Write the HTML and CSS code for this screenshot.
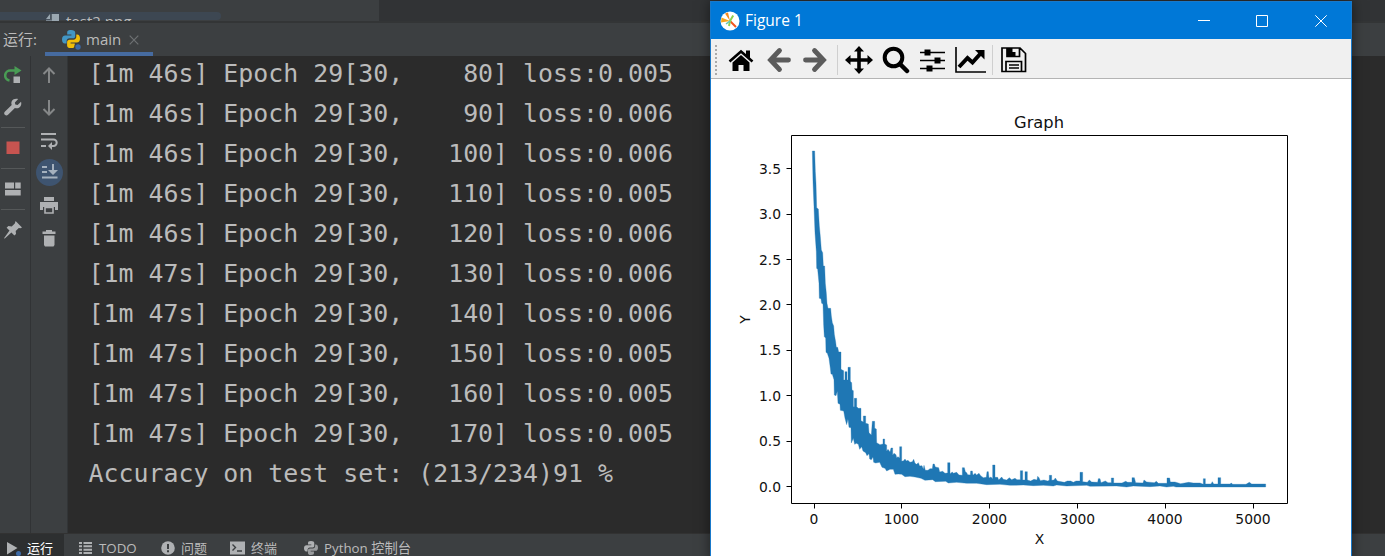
FILE: index.html
```html
<!DOCTYPE html>
<html lang="zh-CN">
<head>
<meta charset="utf-8">
<title>main</title>
<link rel="stylesheet" href="styles.css">
</head>
<body>
<svg class="defs" width="0" height="0">
  <defs>
    <symbol id="python" viewBox="0 0 18 18">
      <path class="py-a" d="M9 0C5.800 0 5.200 1.200 5.200 2.600v2h4.200v.8H3.200C1.200 5.400 0 7 0 9.400s1.200 4 2.800 4h1.800v-2.200c0-1.600 1.300-2.900 2.900-2.900h3.700c1.200 0 2-.9 2-2.100V2.600C13.200 1 11.800 0 9 0z"/>
      <path class="py-b" d="M9 18c3.200 0 3.800-1.200 3.800-2.600v-2H8.600v-.8h6.200c2 0 3.200-1.600 3.200-4s-1.200-4-2.800-4h-.9v2.200c0 1.600-1.300 2.900-2.900 2.900H7.700c-1.600 0-2.600 1-2.600 2.300v3.400C5.100 17 6.200 18 9 18z"/>
    </symbol>
  </defs>
</svg>
<div class="ide">
  <div class="project"><div class="tree">
    <div class="tree-row"><svg width="13" height="13" viewBox="0 0 13 13"><path fill="#9aa7b0" d="M5 0H13V13H0V6H5z"/><path fill="#9aa7b0" d="M4 0V5H0z"/><path fill="#56616a" d="M4.500 0V5.500H0v1h6V0z"/></svg><span>test2.png</span></div>
  </div></div>
  <div class="run-head">
    <span class="run-label">运行:</span>
    <div class="tab">
      <svg width="20" height="20" viewBox="0 0 20 20"><use href="#python" width="18" height="18"/><circle cx="16" cy="17" r="3.700" fill="#3c3f41"/><circle cx="16" cy="17" r="2.700" fill="#3d6aa6"/></svg>
      <span>main</span>
      <svg class="close" width="10" height="10" viewBox="0 0 10 10"><path d="M.7.7l8.600 8.600M9.300.7L.7 9.300"/></svg>
    </div>
  </div>
  <div class="work">
    <div class="tools tools-a">
      <svg width="18" height="18" viewBox="0 0 18 18"><path d="M12 4.500H7A5 5 0 0 0 5.500 14.500" fill="none" stroke="#499c54" stroke-width="2.600"/><path d="M10.500 0L17.500 4.500 10.500 9z" fill="#499c54"/><path d="M9.500 10.500h6.500v6.500h-6.500z" fill="#afb1b3"/></svg>
      <svg width="18" height="18" viewBox="0 0 18 18"><path fill="#afb1b3" d="M17 3.700l-3.400 3.300-2.300-.4-.4-2.200L14.200 1C11.800.1 9 .9 7.900 3c-.7 1.300-.7 2.500-.2 3.900L.8 13.700c-1 1-.7 2.300.1 3.100s2.200.9 3.100 0l6.900-6.900c1.500.6 3 .4 4.400-.5 1.800-1.200 2.400-3.600 1.700-5.700z"/></svg>
      <i class="rule"></i>
      <svg width="18" height="18" viewBox="0 0 18 18"><path fill="#c75450" d="M2.500 2.500h13v12.500h-13z"/></svg>
      <i class="rule"></i>
      <svg width="18" height="18" viewBox="0 0 18 18"><path fill="#afb1b3" d="M1 2.500h9v6H1zM11.200 2.500h5.500v6h-5.500zM1 10h15.700v5.500H1z"/></svg>
      <i class="rule"></i>
      <svg width="18" height="18" viewBox="0 0 18 18"><path fill="#afb1b3" d="M11.600 0L18 6.400l-1.500.8-1.700-.3-3.100 3.200.3 3-1.600 1.500-3-3L.8 17.500 0 17.300l5.500-7.700-2.900-2.900L4.400 5l3.300.4 3.100-3z"/></svg>
    </div>
    <div class="tools tools-b">
      <svg width="18" height="18" viewBox="0 0 18 18"><path class="arrow" d="M9 17V2.500M3.500 8L9 2.500 14.500 8"/></svg>
      <svg width="18" height="18" viewBox="0 0 18 18"><path class="arrow" d="M9 1v14.500M3.500 10L9 15.500 14.500 10"/></svg>
      <svg width="18" height="18" viewBox="0 0 18 18"><path d="M1 2h15M1 7.500h12.500a3.200 3.200 0 0 1 0 6.400H11M1 14h5" fill="none" stroke="#afb1b3" stroke-width="2"/><path d="M12 10v8l-4-4z" fill="#afb1b3"/></svg>
      <svg class="selected" width="27" height="27" viewBox="0 0 27 27"><circle cx="13.500" cy="13.500" r="13.500" fill="#3e5470"/><path fill="#a5b1be" d="M6 7h5v2H6zM6 12h5v2H6zM6 17.500h15.500v2H6zM16 5h2v6h4l-5 5-5-5h4z"/></svg>
      <svg width="18" height="18" viewBox="0 0 18 18"><path fill="#afb1b3" d="M4 0h10v4H4zM0 5h18v8h-3v-3H3v3H0z"/><path d="M5 10.500h8v5.500H5z" fill="none" stroke="#afb1b3" stroke-width="1.600"/></svg>
      <svg width="18" height="18" viewBox="0 0 18 18"><path fill="#afb1b3" d="M6 0h6v1.500h3.500V4h-13V1.500H6zM4 5.500h10.500V15l-1 1.500H5L4 15z"/></svg>
    </div>
    <pre class="console">[1m 46s] Epoch 29[30,    80] loss:0.005
[1m 46s] Epoch 29[30,    90] loss:0.006
[1m 46s] Epoch 29[30,   100] loss:0.006
[1m 46s] Epoch 29[30,   110] loss:0.005
[1m 46s] Epoch 29[30,   120] loss:0.006
[1m 47s] Epoch 29[30,   130] loss:0.006
[1m 47s] Epoch 29[30,   140] loss:0.006
[1m 47s] Epoch 29[30,   150] loss:0.005
[1m 47s] Epoch 29[30,   160] loss:0.005
[1m 47s] Epoch 29[30,   170] loss:0.005
Accuracy on test set: (213/234)91 %</pre>
  </div>
  <div class="status">
    <div class="item active"><svg width="15" height="15" viewBox="0 0 15 15"><path fill="#afb1b3" d="M1 1l10.500 6L1 13.500z"/><circle cx="12.500" cy="12.500" r="2.500" fill="#3d6aa6"/></svg><span>运行</span></div>
    <div class="item todo"><svg width="14" height="14" viewBox="0 0 14 14"><path fill="#afb1b3" d="M0 1h3v2H0zM4.500 1H13v2H4.500zM0 4.300h3v2H0zM4.500 4.300H13v2H4.500zM0 7.700h3v2H0zM4.500 7.700H13v2H4.500zM0 11h3v2H0zM4.500 11H13v2H4.500z"/></svg><span>TODO</span></div>
    <div class="item problems"><svg width="14" height="14" viewBox="0 0 14 14"><circle cx="7" cy="7" r="6.800" fill="#afb1b3"/><path d="M6 3h2v5H6zM6 9.200h2v2H6z" fill="#3c3f41"/></svg><span>问题</span></div>
    <div class="item terminal"><svg width="15" height="14" viewBox="0 0 15 14"><path d="M0 .5h15v13H0z" fill="#afb1b3"/><path d="M2.500 3.500L5.500 6.500l-3 3M7 10h5" fill="none" stroke="#3c3f41" stroke-width="1.400"/></svg><span>终端</span></div>
    <div class="item pyconsole"><svg class="mono" width="14" height="14"><use href="#python"/></svg><span>Python 控制台</span></div>
  </div>
</div>

<div class="figure">
  <div class="titlebar">
    <svg width="20" height="20" viewBox="0 0 20 20"><circle cx="10" cy="10" r="9.500" fill="#fff"/><path d="M10 10L5 2.500 8 1.500z" fill="#f58a1f"/><path d="M10 10L1.500 6.500 1 11.500z" fill="#f7a51d"/><path d="M10 10l6 6" stroke="#f0541e" stroke-width="2"/><path d="M10 10l3.200-5.500M10 10l-1 5" stroke="#8ccf51" stroke-width="2"/><path d="M10 10l-4 3" stroke="#5ec6b3" stroke-width="1.500"/></svg>
    <span class="caption">Figure 1</span>
    <svg class="winbtn" width="12" height="12" viewBox="0 0 12 12"><path d="M0 5.500h12"/></svg>
    <svg class="winbtn" width="12" height="12" viewBox="0 0 12 12"><path d="M.5.5h11v11H.5z"/></svg>
    <svg class="winbtn" width="12" height="12" viewBox="0 0 12 12"><path d="M.3.3l11.400 11.400M11.700.3L.3 11.700"/></svg>
  </div>
  <div class="toolbar">
    <i class="grip"></i>
    <svg class="home" width="26" height="24" viewBox="0 0 26 24"><path d="M4.500 14.500L13 7l8.500 7.500V23h-6v-6h-5v6h-6z"/><path d="M1.500 13.500L13 3.500l11.500 10" fill="none" stroke="#000" stroke-width="2.600"/><path d="M18 2.500h4v8l-4-3.500z"/></svg>
    <svg class="back" width="24" height="26" viewBox="0 0 24 26"><path d="M12.500 3.500L3.500 13l9 9.500M4 13h17.500" fill="none" stroke="#5c5c5c" stroke-width="4.800" stroke-linecap="round"/></svg>
    <svg class="fwd" width="24" height="26" viewBox="0 0 24 26"><path d="M11.500 3.500l9 9.500-9 9.500M20 13H2.500" fill="none" stroke="#5c5c5c" stroke-width="4.800" stroke-linecap="round"/></svg>
    <i class="sep"></i>
    <svg class="pan" width="28" height="28" viewBox="0 0 28 28"><path d="M14 0l5 5.500h-3.200v6.700h6.700V9L28 14l-5.500 5v-3.200h-6.700v6.700H19L14 28l-5-5.500h3.200v-6.700H5.500V19L0 14l5.500-5v3.200h6.700V5.500H9z"/></svg>
    <svg class="mag" width="28" height="28" viewBox="0 0 28 28"><circle cx="11.500" cy="11.500" r="8.800" fill="none" stroke="#000" stroke-width="4"/><path d="M18 18l7 7" stroke="#000" stroke-width="4.500" stroke-linecap="round"/></svg>
    <svg class="sliders" width="25" height="24" viewBox="0 0 25 24"><path d="M0 3.700h25v1.500H0zM0 11.700h25v1.500H0zM0 19.700h25v1.500H0zM4.500 1.500h6v6h-6zM14.500 9.500h6v6h-6zM6.500 17.500h6v6h-6z"/></svg>
    <svg class="trend" width="31" height="26" viewBox="0 0 31 26"><path d="M1 0v25h30" fill="none" stroke="#000" stroke-width="1.600"/><path d="M4 20L12.500 11l5 4.500L26 6" fill="none" stroke="#000" stroke-width="4"/><path d="M20 3h9.500v9.500z"/></svg>
    <i class="sep"></i>
    <svg class="save" width="26" height="26" viewBox="0 0 26 26"><path d="M1 1h18l5.500 5.500v18H1zM5 24v-9.500h15.500V24M6 1v8.500h12.500V1M8 18h10M8 21h10" fill="none" stroke="#000" stroke-width="1.700"/><path d="M6 1h5.500v4h3v4H6z"/></svg>
  </div>
  <svg class="plot" width="640" height="478" viewBox="711 79 640 478">
    <path class="axis" d="M791.500 135.500h496v368h-496zM786.500 486.500h5M786.500 441.500h5M786.500 395.500h5M786.500 350.500h5M786.500 304.500h5M786.500 259.500h5M786.500 214.500h5M786.500 168.500h5M814.500 503.500v5M901.500 503.500v5M989.500 503.500v5M1077.500 503.500v5M1165.500 503.500v5M1253.500 503.500v5"/>
    <g transform="translate(780 290) scale(.33333)">
      <path class="loss" d="M97-417H104L106-355 108-320 110-247 115-243 118-192 121-160 124-120 128-112 130-72H134L136-20 139 10 141 40 144 55H152L154 78 157 98 161 108 163 133 167 156 169 172H173L176 186H183V238L191 242V270H195V245H201V270H204V232H211V274L215 278 216 300 220 302V350H223V325H230V350L235 355H243V392L250 396V378H257V400L265 402 267 428 274 435 277 394H284V415L289 417 290 458 300 464 309 462V447H314V462L320 465V484L324 478 330 486 333 474H338V496L342 490 348 494 350 503 354 500 359 504V470H365V514L371 512 375 507 379 513 384 511 390 517 397 515 401 508 405 520 410 523 415 518 419 528 426 527 430 538 432 526 436 541 444 541 450 536 457 536 459 522H463L466 531 476 533 479 546 488 544 495 550 503 549V518H510V551L517 546 520 550 530 547 537 555 547 556V533H553L556 545 560 548 563 554 571 555 572 543 577 543 579 556 585 550 590 555 597 550 602 557 610 563 619 562 621 545H625L627 564 633 561 638 567V525H645V562H653L656 570 665 561 670 568 680 570 688 563 695 569 705 565 711 569 721 569V542H728V570H735V545H742V570L752 573 762 568 771 570 773 559 777 563 781 572 792 570 803 573 808 571V556H815V571L822 570 826 564 832 573 853 577 862 573 872 573 880 577 888 573 900 573V547H908V575L922 577 928 570 935 576 953 577 955 566H960L963 578 976 573 984 578 994 578V564H1001V579L1026 579 1037 574 1043 577 1056 577V563H1063L1067 578 1089 579 1092 570 1100 576 1123 578 1129 574 1135 580H1161V564H1169L1171 576H1185L1202 581 1226 577 1240 579 1260 579 1270 583V566H1276V582H1293L1297 575 1301 582H1314V563H1322V582H1350L1354 579 1358 583H1398L1408 577 1415 582H1457V591H1188L1180 589 1160 591 1140 588 1110 590 1060 588 1040 591 1010 588 930 589 920 586 860 588 830 585 820 588 790 586 760 587 730 585 690 586 660 583 620 584 590 580 560 580 530 577 505 579 497 574 466 575 458 569 435 571 423 565 405 561 390 559 375 560 365 553 355 552 345 553 340 538 330 538 320 543 315 535 306 532 299 517 287 519 281 517 279 501 274 509 269 507 267 491 261 497 257 488 249 483 245 470 239 478 235 463 229 460 224 463 220 445 214 459 213 413 207 412 204 387 200 404 195 385 191 363 181 361 180 343 174 340 172 304 168 317 163 315 162 269 157 253 153 252 151 235 147 205 142 190 138 187 137 144 133 140 131 106 129 42 125 40 123 26 118 25 117-20 113-62 110-65 109-115 105-172 102-250 99-325z"/>
    </g>
    <g class="ticks end"><text x="781" y="491.500">0.0</text><text x="781" y="446">0.5</text><text x="781" y="400.500">1.0</text><text x="781" y="355">1.5</text><text x="781" y="310">2.0</text><text x="781" y="264.500">2.5</text><text x="781" y="219">3.0</text><text x="781" y="173.500">3.5</text></g>
    <g class="ticks mid"><text x="814" y="524">0</text><text x="901.500" y="524">1000</text><text x="989.500" y="524">2000</text><text x="1077.500" y="524">3000</text><text x="1165" y="524">4000</text><text x="1253" y="524">5000</text><text x="1039.500" y="544">X</text><text transform="translate(750 319.500) rotate(-90)">Y</text><text class="heading" x="1039" y="128">Graph</text></g>
  </svg>
</div>
</body>
</html>
```
FILE: styles.css
```css
* { box-sizing: border-box; }
body { margin: 0; height: 556px; overflow: hidden; position: relative; background: #3c3f41; color: #bbbbbb; font-family: "Open Sans", "Noto Sans CJK SC", sans-serif; }
svg { display: block; flex: none; }
.defs { position: absolute; }
.py-a { fill: var(--py-a, #4296c4); }
.py-b { fill: var(--py-b, #f2bf08); }
.mono { --py-a: #afb1b3; --py-b: #999b9d; }
.ide { height: 556px; display: flex; flex-direction: column; }
.project { height: 23px; background: #313335; border-bottom: 2px solid #333536; overflow: hidden; }
.tree { width: 379px; height: 21px; background: #3c3f41; padding-top: 12px; }
.tree-row { width: 221px; height: 8px; background: #3d4752; border-radius: 0 4px 4px 0; display: flex; gap: 7px; padding: 2px 0 0 46px; font-size: 15px; line-height: 15px; }
.run-head { height: 33px; display: flex; }
.run-label { width: 45px; padding-left: 3px; font-size: 15px; line-height: 32px; }
.tab { width: 108px; border-bottom: 4px solid #466ba0; display: flex; align-items: center; padding: 4px 0 0 17px; font-size: 15px; line-height: 24px; }
.tab span { width: 35px; margin: -2px 8px 0 4px; }
.close { fill: none; stroke: #6e7173; stroke-width: 1.200; }
.work { height: 478px; display: flex; background: #2b2b2b; border-bottom: 1px solid #323232; }
.tools { display: flex; flex-direction: column; align-items: center; background: #3c3f41; }
.tools-a { width: 31px; border-right: 1px solid #313335; padding: 10px 4px 0 0; gap: 14px; }
.tools-a svg:nth-of-type(n+3) { margin-top: -3px; }
.rule { width: 24px; height: 1px; background: #555859; }
.tools-a .rule { margin-top: -3px; }
.tools-b { width: 37px; padding-top: 10px; gap: 15px; border-right: 1px solid #323537; }
.selected { margin: -6px 0 -4px; }
.arrow { fill: none; stroke: #858788; stroke-width: 2; }
.console { margin: -2px 0 0; padding: 0 0 0 20.500px; font-family: "DejaVu Sans Mono", monospace; font-size: 24.900px; line-height: 40px; color: #bbbbbb; }
.status { height: 22px; display: flex; font-size: 13px; line-height: 27px; }
.item { display: flex; gap: 6px; padding-top: 1px; height: 22px; white-space: nowrap; }
.item svg { margin-top: 6px; }
.active { width: 64px; background: #2d2f30; color: #fff; padding-left: 6px; gap: 6px; }
.todo { width: 97px; padding-left: 15px; font-size: 13.300px; }
.problems { width: 69px; }
.terminal { width: 74px; }
.pyconsole { font-size: 13.300px; }
.figure { position: absolute; left: 710px; top: 1px; width: 642px; height: 560px; background: #fff; border: 1px solid #1979ca; box-shadow: 0 0 12px rgba(0,0,0,.5); }
.titlebar { height: 37px; background: #0078d7; color: #fff; display: flex; align-items: center; padding: 0 24px 0 9px; }
.caption { margin: -1px 0 0 5px; font-size: 15.500px; flex: 1; }
.winbtn { fill: none; stroke: #fff; stroke-width: 1; margin-left: 46px; }
.winbtn:last-child { margin-left: 47px; }
.toolbar { height: 40px; background: #f0f0f0; border-bottom: 1px solid #b4b4b4; display: flex; align-items: center; padding-top: 2px; }
.grip { width: 2px; height: 30px; margin-left: 4px; margin-right: 1px; background: repeating-linear-gradient(#aaa 0 2px, #f0f0f0 2px 4px); }
.home { margin-left: 10px; }
.back { margin-left: 13px; }
.fwd { margin-left: 12px; }
.sep { width: 1px; height: 30px; background: #cfcfcf; margin-left: 10px; }
.pan { margin-left: 7px; }
.mag { margin-left: 9px; }
.sliders { margin-left: 10px; }
.trend { margin-left: 10px; }
.trend + .sep { margin-left: 6px; }
.save { margin-left: 8px; }
.axis { fill: none; stroke: #000; stroke-width: 1; }
.loss { fill: #1f77b4; stroke: #1f77b4; stroke-width: 1; stroke-linejoin: round; }
.ticks { font-family: "DejaVu Sans", sans-serif; font-size: 13.890px; fill: #111; }
.end { text-anchor: end; }
.mid { text-anchor: middle; }
.heading { font-size: 16.300px; }
```
